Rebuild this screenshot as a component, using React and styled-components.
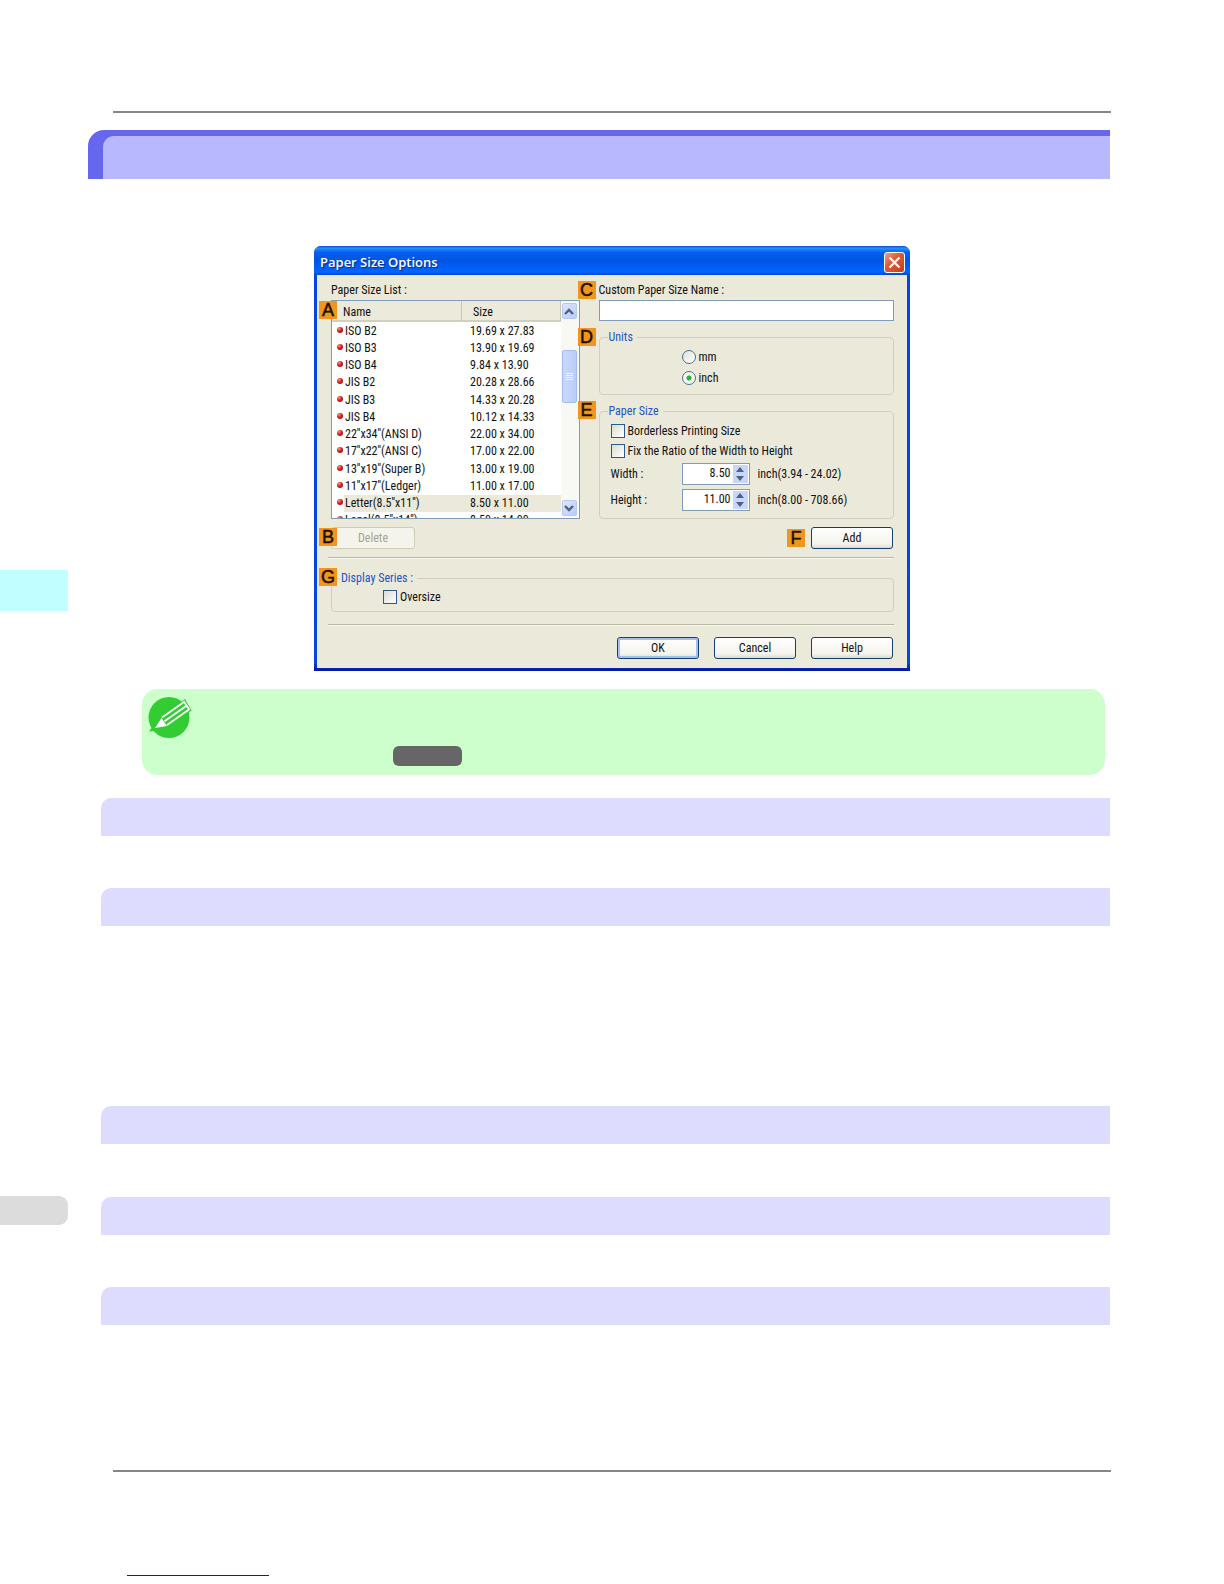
import { useState } from "react";
import styled, { createGlobalStyle, css } from "styled-components";

const GlobalStyle = createGlobalStyle`
  *, *::before, *::after {
    box-sizing: border-box;
  }
  body {
    margin: 0;
    background: #fff;
  }
  button, input {
    font: inherit;
    color: inherit;
    margin: 0;
    padding: 0;
  }
`;

/* page */

const Page = styled.div`
  display: grid;
  grid-template-columns: 68px 1fr;
  font-family: "Roboto Condensed", "Liberation Sans Narrow", "Liberation Sans", Arial, sans-serif;
  font-size: 12px;
  line-height: 16px;
  color: #111;
`;
const Rail = styled.nav`
  display: flex;
  flex-direction: column;
  padding-top: 570px;
  gap: 585px;
`;
const ChapterTab = styled.div`
  height: 41px;
  background: #c0ffff;
`;
const PageTab = styled.div`
  height: 29px;
  background: #dcdcdc;
  border-radius: 0 9px 9px 0;
`;
const Main = styled.main`
  padding: 111px 114px 8px 20px;
`;
const Rule = styled.hr`
  height: 2px;
  margin: 0 -1px 0 25px;
  border: 0;
  background: #868686;
`;
const PageTitle = styled.header`
  height: 49px;
  margin-top: 17px;
  padding: 6px 0 0 15px;
  background: #6666ee;
  border-radius: 16px 0 0 0;
`;
const PageTitleInner = styled.div`
  height: 100%;
  background: #b8b8ff;
  border-radius: 11px 0 0 0;
`;
const Figure = styled.figure`
  display: flex;
  justify-content: center;
  margin: 67px 0 18px;
  padding-left: 26px;
`;
const Note = styled.aside`
  display: flex;
  gap: 201px;
  height: 86px;
  margin: 0 5px 23px 54px;
  padding: 7px 6px 9px;
  background: #ccffcc;
  border-radius: 15px;
`;
const Pill = styled.span`
  align-self: flex-end;
  width: 69px;
  height: 20px;
  background: #666;
  border-radius: 6px;
`;
const Section = styled.section`
  margin-left: 13px;
  padding-bottom: ${(props) => props.$space}px;
`;
const SectionBar = styled.div`
  height: 38px;
  background: #dddcff;
  border-radius: 10px 0 0 0;
`;
const FooterLink = styled.a`
  display: block;
  width: 142px;
  margin: 103px 0 0 39px;
  border-bottom: 1px solid #1a1a80;
`;

/* dialog */

const Dialog = styled.div`
  flex: 0 1 596px;
  padding: 0 3px 3px;
  background: linear-gradient(#0048e0, #0648d8 98%, #00189c);
  border-radius: 7px 7px 0 0;
  overflow: hidden;
`;
const TitleBar = styled.div`
  display: flex;
  align-items: center;
  justify-content: space-between;
  height: 29px;
  margin: 0 -3px;
  padding: 3px 5px 0 6px;
  background: linear-gradient(#0a50d8, #2a8cff 8%, #0560ee 22%, #0054e3 50%, #0062fa 80%, #0064ff 90%, #0046cc);
`;
const DialogTitle = styled.h1`
  margin: 0;
  font-family: "Open Sans", "Noto Sans", sans-serif;
  font-size: 13px;
  font-weight: 600;
  line-height: 16px;
  color: #fff;
  text-shadow: 1px 1px 1px #0a2a80;
`;
const CloseButton = styled.button`
  display: flex;
  align-items: center;
  justify-content: center;
  width: 21px;
  height: 21px;
  border: 1px solid #fff;
  border-radius: 3px;
  background: linear-gradient(135deg, #f0a088, #e25a38 40%, #c83c14);
`;
const Body = styled.div`
  padding: 7px 13px 9px 11px;
  background: #ebe9d9;
`;
const Columns = styled.div`
  display: grid;
  grid-template-columns: 249fr 296fr;
  gap: 19px;
  padding-left: 3px;
`;
const Label = styled.label`
  display: block;
  margin-bottom: 2px;
`;
const Anchor = styled.div`
  position: relative;
  margin-top: ${(props) => props.$gap || 0}px;
  margin-left: ${(props) => props.$indent || 0}px;
`;
const Badge = styled.span`
  width: 18px;
  height: 18px;
  flex: none;
  background: #f0961e;
  color: #1a1000;
  font-family: "Liberation Sans", Arial, sans-serif;
  font-size: 18px;
  line-height: 18px;
  text-align: center;
  -webkit-text-stroke: 0.5px #1a1000;
  ${(props) =>
    props.$left &&
    css`
      position: absolute;
      z-index: 1;
      left: ${props.$left}px;
      top: ${props.$top}px;
    `}
`;
const Separator = styled.hr`
  height: 2px;
  margin: ${(props) => props.$above}px 0 11px;
  border: 0;
  border-top: 1px solid #b9b7a6;
  border-bottom: 1px solid #f8f7ee;
`;

/* paper size list */

const ListBox = styled.div`
  display: flex;
  height: 219px;
  border: 1px solid #7f9db9;
  background: #fff;
  overflow: hidden;
`;
const ListView = styled.div`
  flex: 1;
  height: 217px;
  overflow: hidden;
`;
const Table = styled.table`
  width: 100%;
  height: 228px;
  table-layout: fixed;
  border-collapse: separate;
  border-spacing: 0;
  white-space: nowrap;

  th {
    height: 21px;
    padding: 2px 0 0 11px;
    font-weight: 400;
    text-align: left;
    background: #ebeadb;
    border-bottom: 2px solid #d2cfbd;
    border-right: 1px solid #c9c6b6;
  }
  td {
    padding: 0 0 0 1px;
    line-height: 16px;
  }
  td:last-child {
    padding-left: 8px;
  }
`;
const Row = styled.tr`
  td + td {
    background: ${(props) => (props.$selected ? "#ebe9d9" : "transparent")};
  }
`;
const Dot = styled.span`
  display: block;
  width: 6px;
  height: 6px;
  margin: 0 0 2px 4px;
  border-radius: 50%;
  background: radial-gradient(circle at 35% 30%, #ff9a8a, #d81818 45%, #a00808);
`;
const ScrollBar = styled.div`
  display: flex;
  flex-direction: column;
  width: 18px;
  padding: 2px 2px 2px 1px;
  background: #f8f8f4;
`;
const ScrollButton = styled.button`
  display: flex;
  align-items: center;
  justify-content: center;
  height: 16px;
  border: 1px solid #b4c8f0;
  border-radius: 2px;
  background: linear-gradient(135deg, #dce6fe, #b8ccf8);
  color: #4d6185;
`;
const Thumb = styled.div`
  display: flex;
  align-items: center;
  justify-content: center;
  height: 53px;
  margin: 31px 0 auto;
  border: 1px solid #a4bcf0;
  border-radius: 2px;
  background: linear-gradient(90deg, #cad8fc, #b9cdfa);
  color: #eef4ff;
`;

/* form parts */

const TextField = styled.input`
  display: block;
  width: 100%;
  height: 21px;
  padding: 0 4px;
  border: 1px solid #7f9db9;
  background: #fff;
`;
const Group = styled.fieldset`
  min-width: 0;
  margin: 0;
  padding: ${(props) => props.$top || 0}px 0 ${(props) => props.$bottom || 5}px ${(props) => props.$indent}px;
  border: 1px solid #d2d0bc;
  border-radius: 4px;
`;
const Legend = styled.legend`
  height: 16px;
  margin-left: ${(props) => props.$shift || 0}px;
  padding: 0 4px 0 1px;
  color: #2454c8;
`;
const Choice = styled.label`
  display: flex;
  align-items: center;
  gap: 3px;
  height: ${(props) => props.$height || 20}px;
`;
const Check = styled.input`
  appearance: none;
  width: 14px;
  height: 14px;
  border: 1px solid #2c5a8c;
  background: linear-gradient(135deg, #dcdcd4, #fff);
  &:checked {
    background: #21a121;
    box-shadow: inset 0 0 0 3px #fff;
  }
`;
const Radio = styled.input`
  appearance: none;
  width: 14px;
  height: 14px;
  border: 1px solid #4a6f98;
  border-radius: 50%;
  background: linear-gradient(135deg, #e0e0d8, #fff);
  &:checked {
    background: radial-gradient(circle, #2fae2f 2px, #f4f6f0 3px);
  }
`;
const SizeRow = styled.div`
  display: grid;
  grid-template-columns: 71px 68px 1fr;
  align-items: center;
  height: 26px;
`;
const Spin = styled.div`
  display: flex;
  height: 22px;
  padding: 1px;
  border: 1px solid #7f9db9;
  background: #fff;

  input {
    flex: 1;
    min-width: 0;
    padding: 0 2px 2px 0;
    border: 0;
    background: none;
    text-align: right;
  }
`;
const SpinButtons = styled.div`
  display: grid;
  grid-template-rows: 1fr 1fr;
  width: 15px;

  button {
    display: flex;
    align-items: center;
    justify-content: center;
    border: 0;
    background: #c8d6fb;
    color: #4d6185;
  }
`;
const Unit = styled.span`
  padding-left: 8px;
`;
const Bar = styled.div`
  display: flex;
  align-items: center;
  justify-content: flex-end;
  gap: ${(props) => props.$gap || 15}px;
  padding-right: 1px;
`;
const Button = styled.button`
  display: block;
  width: 82px;
  height: 22px;
  border: 1px solid #123f74;
  border-radius: 3px;
  background: linear-gradient(#fff, #f4f3ec 80%, #dcd8cc);
  ${(props) =>
    props.$primary &&
    css`
      box-shadow: inset 0 0 0 2px #a4bff0;
    `}
  &:disabled {
    width: 84px;
    border-color: #cfccba;
    background: #f5f4ea;
    color: #a5a394;
  }
`;

const sizes = [
  ["ISO B2", "19.69 x 27.83"],
  ["ISO B3", "13.90 x 19.69"],
  ["ISO B4", "9.84 x 13.90"],
  ["JIS B2", "20.28 x 28.66"],
  ["JIS B3", "14.33 x 20.28"],
  ["JIS B4", "10.12 x 14.33"],
  ["22''x34''(ANSI D)", "22.00 x 34.00"],
  ["17''x22''(ANSI C)", "17.00 x 22.00"],
  ["13''x19''(Super B)", "13.00 x 19.00"],
  ["11''x17''(Ledger)", "11.00 x 17.00"],
  ["Letter(8.5''x11'')", "8.50 x 11.00"],
  ["Legal(8.5''x14'')", "8.50 x 14.00"],
];

// space left under each section heading
const sections = [52, 180, 53, 52, 145];

function Chevron({ down }) {
  return (
    <svg width="10" height="7" viewBox="0 0 10 7" fill="none" stroke="currentColor" strokeWidth="2.4">
      <path d={down ? "M1 1l4 4 4-4" : "M1 6l4-4 4 4"} />
    </svg>
  );
}

function Arrow({ down }) {
  return (
    <svg width="8" height="5" viewBox="0 0 8 5" fill="currentColor">
      <path d={down ? "M0 0h8L4 5z" : "M0 5h8L4 0z"} />
    </svg>
  );
}

function PencilIcon() {
  return (
    <svg width="44" height="44" viewBox="0 0 44 44">
      <circle cx="21" cy="21.5" r="20.5" fill="#33cc33" />
      <path d="M1 35.500l5-7 5 6z" fill="#33cc33" />
      <path d="M13 20L37 3l6.500 11.500L20 31z" fill="#33cc33" />
      <path d="M7 32l6.500-10 5.500 8z" fill="#fff" />
      <path d="M14 21.500L36 6M16.500 25.200l22-15.500M19 29l22-15.500M35.500 5l6 9" fill="none" stroke="#fff" strokeWidth="1.8" />
    </svg>
  );
}

function SpinBox({ id, value, onChange, step = 0.5 }) {
  const move = (delta) => onChange((Number(value) + delta).toFixed(2));
  return (
    <Spin>
      <input id={id} type="text" value={value} onChange={(e) => onChange(e.target.value)} />
      <SpinButtons>
        <button type="button" aria-label="Increase" onClick={() => move(step)}>
          <Arrow />
        </button>
        <button type="button" aria-label="Decrease" onClick={() => move(-step)}>
          <Arrow down />
        </button>
      </SpinButtons>
    </Spin>
  );
}

function SizeList() {
  const [selected, setSelected] = useState(10);
  return (
    <ListBox>
      <ListView>
        <Table aria-labelledby="size-list">
          <colgroup>
            <col width="12" />
            <col width="118" />
            <col />
          </colgroup>
          <thead>
            <tr>
              <th colSpan={2}>Name</th>
              <th>Size</th>
            </tr>
          </thead>
          <tbody>
            {sizes.map(([name, size], i) => (
              <Row key={name} $selected={i === selected} onClick={() => setSelected(i)}>
                <td>
                  <Dot />
                </td>
                <td>{name}</td>
                <td>{size}</td>
              </Row>
            ))}
          </tbody>
        </Table>
      </ListView>
      <ScrollBar>
        <ScrollButton type="button" aria-label="Scroll up">
          <Chevron />
        </ScrollButton>
        <Thumb>
          <svg width="7" height="8" stroke="currentColor">
            <path d="M0 .5h7M0 2.500h7M0 4.500h7M0 6.500h7" />
          </svg>
        </Thumb>
        <ScrollButton type="button" aria-label="Scroll down">
          <Chevron down />
        </ScrollButton>
      </ScrollBar>
    </ListBox>
  );
}

function PaperSizeDialog() {
  const [units, setUnits] = useState("inch");
  const [width, setWidth] = useState("8.50");
  const [height, setHeight] = useState("11.00");
  return (
    <Dialog role="dialog" aria-labelledby="dialog-title">
      <TitleBar>
        <DialogTitle id="dialog-title">Paper Size Options</DialogTitle>
        <CloseButton type="button" aria-label="Close">
          <svg width="13" height="13" viewBox="0 0 13 13" stroke="#fff" strokeWidth="2.2">
            <path d="M1.500 1.500l10 10M11.500 1.500l-10 10" />
          </svg>
        </CloseButton>
      </TitleBar>
      <Body>
        <Columns>
          <div>
            <Label as="div" id="size-list">Paper Size List :</Label>
            <Anchor>
              <Badge $left={-12} $top={1}>A</Badge>
              <SizeList />
            </Anchor>
          </div>
          <div>
            <Anchor>
              <Badge $left={-21} $top={-1}>C</Badge>
              <Label htmlFor="custom-name">Custom Paper Size Name :</Label>
              <TextField id="custom-name" type="text" />
            </Anchor>
            <Anchor $gap={8}>
              <Badge $left={-21} $top={-1}>D</Badge>
              <Group $indent={82} $top={1} $bottom={6}>
                <Legend $shift={-74}>Units</Legend>
                {["mm", "inch"].map((unit) => (
                  <Choice key={unit} $height={21}>
                    <Radio type="radio" name="units" checked={units === unit} onChange={() => setUnits(unit)} />
                    {unit}
                  </Choice>
                ))}
              </Group>
            </Anchor>
            <Anchor $gap={8}>
              <Badge $left={-21} $top={-2}>E</Badge>
              <Group $indent={11} $top={2}>
                <Legend $shift={-3}>Paper Size</Legend>
                <Choice>
                  <Check type="checkbox" />
                  Borderless Printing Size
                </Choice>
                <Choice>
                  <Check type="checkbox" />
                  Fix the Ratio of the Width to Height
                </Choice>
                <SizeRow>
                  <label htmlFor="width">Width :</label>
                  <SpinBox id="width" value={width} onChange={setWidth} />
                  <Unit>inch(3.94 - 24.02)</Unit>
                </SizeRow>
                <SizeRow>
                  <label htmlFor="height">Height :</label>
                  <SpinBox id="height" value={height} onChange={setHeight} />
                  <Unit>inch(8.00 - 708.66)</Unit>
                </SizeRow>
              </Group>
            </Anchor>
          </div>
        </Columns>
        <Columns>
          <Anchor $gap={8}>
            <Badge $left={-12} $top={1}>B</Badge>
            <Button type="button" disabled>Delete</Button>
          </Anchor>
          <Anchor $gap={8}>
            <Bar $gap={6}>
              <Badge>F</Badge>
              <Button type="button">Add</Button>
            </Bar>
          </Anchor>
        </Columns>
        <Separator $above={8} />
        <Anchor $indent={3}>
          <Badge $left={-12} $top={-2}>G</Badge>
          <Group $indent={51} $top={1} $bottom={4}>
            <Legend $shift={-43}>Display Series :</Legend>
            <Choice>
              <Check type="checkbox" />
              Oversize
            </Choice>
          </Group>
        </Anchor>
        <Separator $above={12} />
        <Bar>
          <Button type="button" $primary>OK</Button>
          <Button type="button">Cancel</Button>
          <Button type="button">Help</Button>
        </Bar>
      </Body>
    </Dialog>
  );
}

export default function App() {
  return (
    <>
      <GlobalStyle />
      <Page>
        <Rail>
          <ChapterTab />
          <PageTab />
        </Rail>
        <Main>
          <Rule />
          <PageTitle>
            <PageTitleInner />
          </PageTitle>
          <Figure>
            <PaperSizeDialog />
          </Figure>
          <Note>
            <PencilIcon />
            <Pill />
          </Note>
          {sections.map((space, i) => (
            <Section key={i} $space={space}>
              <SectionBar />
            </Section>
          ))}
          <Rule />
          <FooterLink href="#top" aria-label="Back to top" />
        </Main>
      </Page>
    </>
  );
}
